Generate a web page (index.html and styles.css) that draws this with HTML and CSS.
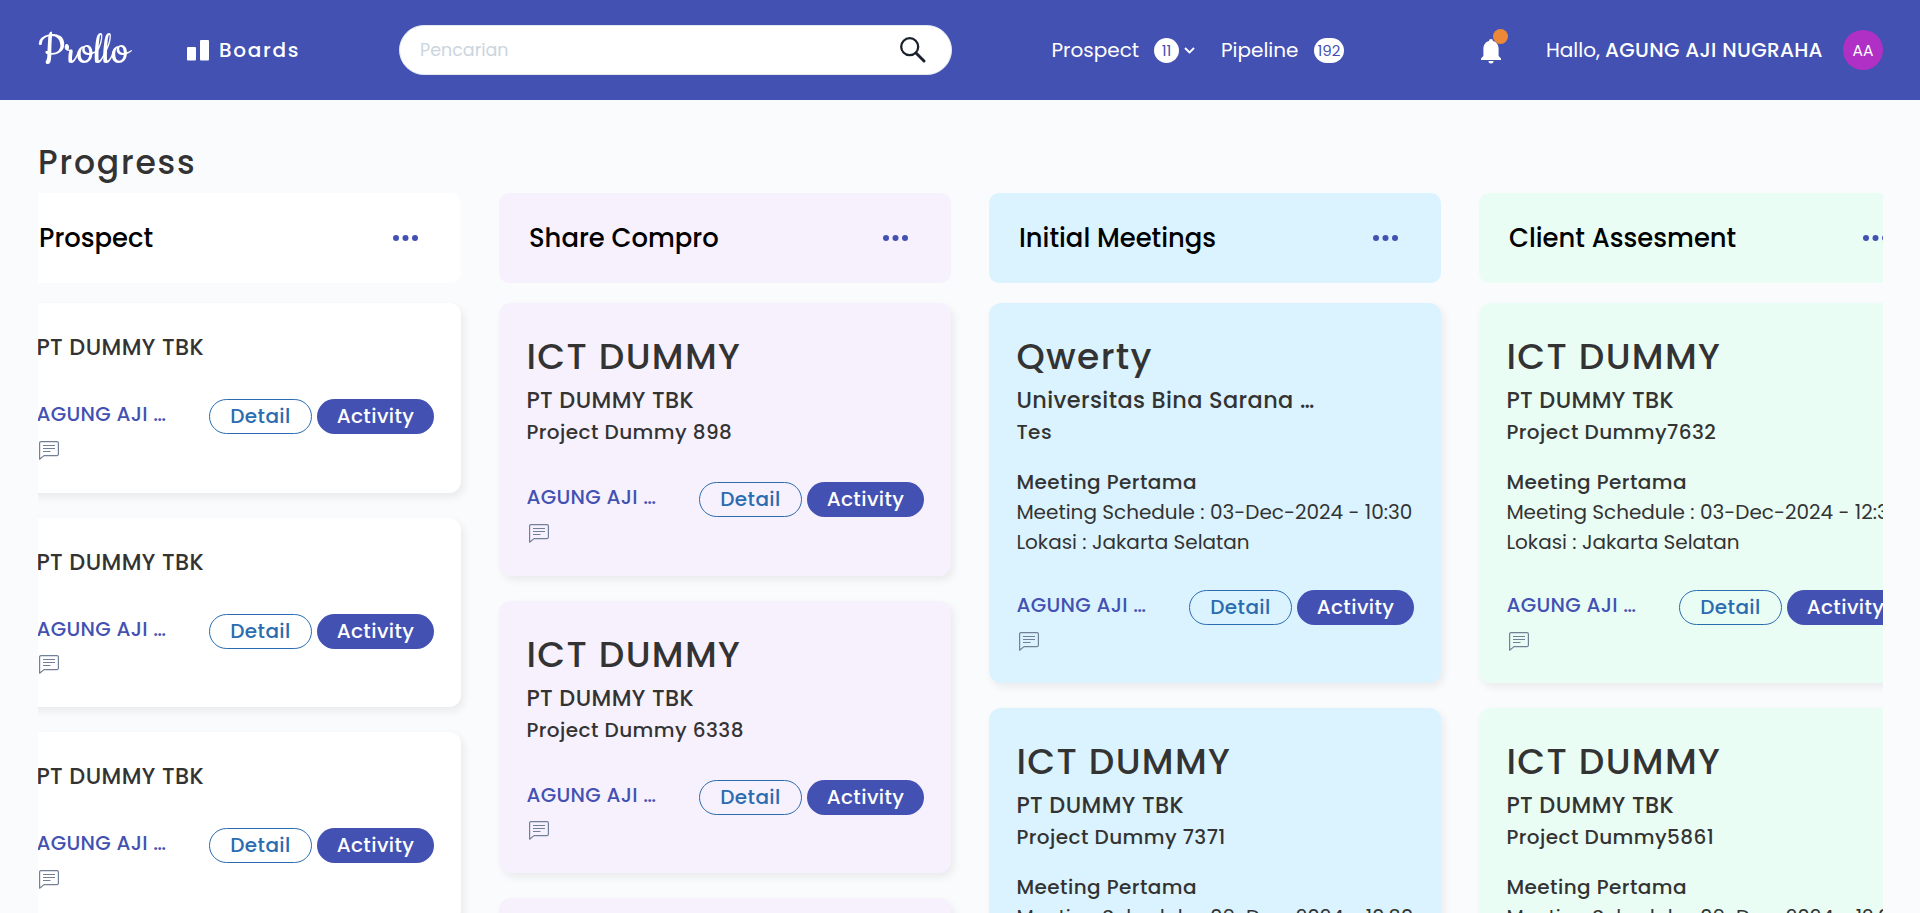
FILE: index.html
```
<!DOCTYPE html>
<html lang="id">
<head>
<meta charset="utf-8">
<title>Prollo - Boards</title>
<link rel="stylesheet" href="styles.css">
</head>
<body>
<svg class="sprite" aria-hidden="true">
  <symbol id="comment" viewBox="0 0 20 19">
    <path d="M.6 18.2V2A1.4 1.4 0 0 1 2 .6h16A1.4 1.4 0 0 1 19.400 2v11.200a1.400 1.400 0 0 1-1.400 1.400H5z M4 4.500h12 M4 7.500h12 M4 10.500h7.500" fill="none" stroke="#718096" stroke-width="1.200" stroke-linejoin="round"/>
  </symbol>
  <symbol id="dots" viewBox="0 0 26 6">
    <circle cx="3" cy="3" r="3"/><circle cx="12.500" cy="3" r="3"/><circle cx="22" cy="3" r="3"/>
  </symbol>
</svg>
<header class="navbar">
  <div class="logo">Prollo</div>
  <a class="boards">
    <svg width="22" height="21" viewBox="0 0 22 21" fill="#fff"><rect x="0" y="7" width="9" height="13.500" rx="1"/><rect x="13" y="0" width="9" height="20.500" rx="1"/></svg>
    <span>Boards</span>
  </a>
  <div class="search">
    <span>Pencarian</span>
    <svg width="26" height="26" viewBox="0 0 26 26" fill="none" stroke="#1a202c"><circle cx="9.700" cy="9.700" r="8.500" stroke-width="2.300"/><path d="M16 16l8 8" stroke-width="2.900" stroke-linecap="round"/></svg>
  </div>
  <nav class="links">
    <span class="link-prospect">Prospect</span><b class="count">11</b>
    <svg class="chevron" width="11" height="7" viewBox="0 0 11 7" fill="none" stroke="#fff" stroke-width="1.900"><path d="M1 1l4.500 4.500L10 1"/></svg>
    <span class="link-pipeline">Pipeline</span><b class="count wide">192</b>
  </nav>
  <div class="bell">
    <svg width="20" height="25" viewBox="0 0 20 25" fill="#fff"><path d="M10 0a2 2 0 0 1 2 2c3.800 1 5.600 4 5.600 8v7l2.400 2.500V21H0v-1.500L2.400 17v-7C2.400 6 4.200 3 8 2a2 2 0 0 1 2-2z"/><path d="M7.500 22h5a2.500 2.500 0 0 1-5 0z"/></svg>
    <i class="alert"></i>
  </div>
  <div class="user"><span class="hello">Hallo,</span><span class="name">AGUNG AJI NUGRAHA</span></div>
  <div class="avatar">AA</div>
</header>
<main>
  <h1>Progress</h1>
  <div class="board">
    <section class="column white">
      <div class="column-head"><h2>Prospect</h2><svg width="26" height="6"><use href="#dots"/></svg></div>
      <article class="card">
        <p class="company">PT DUMMY TBK</p>
        <footer><div><p class="owner">AGUNG AJI …</p><svg width="20" height="19"><use href="#comment"/></svg></div><button class="detail">Detail</button><button class="activity">Activity</button></footer>
      </article>
      <article class="card">
        <p class="company">PT DUMMY TBK</p>
        <footer><div><p class="owner">AGUNG AJI …</p><svg width="20" height="19"><use href="#comment"/></svg></div><button class="detail">Detail</button><button class="activity">Activity</button></footer>
      </article>
      <article class="card">
        <p class="company">PT DUMMY TBK</p>
        <footer><div><p class="owner">AGUNG AJI …</p><svg width="20" height="19"><use href="#comment"/></svg></div><button class="detail">Detail</button><button class="activity">Activity</button></footer>
      </article>
    </section>
    <section class="column purple">
      <div class="column-head"><h2>Share Compro</h2><svg width="26" height="6"><use href="#dots"/></svg></div>
      <article class="card">
        <h3>ICT DUMMY</h3>
        <p class="company">PT DUMMY TBK</p>
        <p class="project">Project Dummy 898</p>
        <footer><div><p class="owner">AGUNG AJI …</p><svg width="20" height="19"><use href="#comment"/></svg></div><button class="detail">Detail</button><button class="activity">Activity</button></footer>
      </article>
      <article class="card">
        <h3>ICT DUMMY</h3>
        <p class="company">PT DUMMY TBK</p>
        <p class="project">Project Dummy 6338</p>
        <footer><div><p class="owner">AGUNG AJI …</p><svg width="20" height="19"><use href="#comment"/></svg></div><button class="detail">Detail</button><button class="activity">Activity</button></footer>
      </article>
      <article class="card"></article>
    </section>
    <section class="column blue">
      <div class="column-head"><h2>Initial Meetings</h2><svg width="26" height="6"><use href="#dots"/></svg></div>
      <article class="card">
        <h3>Qwerty</h3>
        <p class="company">Universitas Bina Sarana …</p>
        <p class="project">Tes</p>
        <div class="meeting"><p class="meeting-name">Meeting Pertama</p><p class="schedule">Meeting Schedule : 03-Dec-2024 - 10:30</p><p class="place">Lokasi : Jakarta Selatan</p></div>
        <footer><div><p class="owner">AGUNG AJI …</p><svg width="20" height="19"><use href="#comment"/></svg></div><button class="detail">Detail</button><button class="activity">Activity</button></footer>
      </article>
      <article class="card">
        <h3>ICT DUMMY</h3>
        <p class="company">PT DUMMY TBK</p>
        <p class="project">Project Dummy 7371</p>
        <div class="meeting"><p class="meeting-name">Meeting Pertama</p><p class="schedule">Meeting Schedule : 09-Dec-2024 - 10:30</p></div>
      </article>
    </section>
    <section class="column green">
      <div class="column-head"><h2>Client Assesment</h2><svg width="26" height="6"><use href="#dots"/></svg></div>
      <article class="card">
        <h3>ICT DUMMY</h3>
        <p class="company">PT DUMMY TBK</p>
        <p class="project">Project Dummy7632</p>
        <div class="meeting"><p class="meeting-name">Meeting Pertama</p><p class="schedule">Meeting Schedule : 03-Dec-2024 - 12:30</p><p class="place">Lokasi : Jakarta Selatan</p></div>
        <footer><div><p class="owner">AGUNG AJI …</p><svg width="20" height="19"><use href="#comment"/></svg></div><button class="detail">Detail</button><button class="activity">Activity</button></footer>
      </article>
      <article class="card">
        <h3>ICT DUMMY</h3>
        <p class="company">PT DUMMY TBK</p>
        <p class="project">Project Dummy5861</p>
        <div class="meeting"><p class="meeting-name">Meeting Pertama</p><p class="schedule">Meeting Schedule : 09-Dec-2024 - 12:00</p></div>
      </article>
    </section>
  </div>
</main>
</body>
</html>
```

FILE: styles.css
```
* { box-sizing: border-box; }
body { margin: 0; height: 913px; overflow: hidden; background: #fafbfd; color: #333; font-family: Poppins, Inter, sans-serif; }
h1, h2, h3, p { margin: 0; font-weight: 500; white-space: nowrap; }
svg { display: block; flex: none; }
.sprite { position: absolute; width: 0; height: 0; }

.navbar { display: flex; align-items: center; height: 100px; padding: 0 37px 0 38px; background: #4351b3; color: #fff; font-size: 20px; white-space: nowrap; }
.logo { width: 149px; padding-top: 4px; font: 48.500px/50px Cookie, cursive; }
.boards { display: flex; align-items: center; gap: 10px; width: 212px; font-weight: 500; letter-spacing: 1.700px; }
.search { display: flex; align-items: center; justify-content: space-between; width: 553px; height: 50px; padding: 0 25px 0 20px; border: 1px solid #e2e8f0; border-radius: 25px; background: #fff; color: #cbd5e0; font-size: 17.500px; }
.links { display: flex; align-items: center; width: 429px; padding-left: 99.500px; }
.link-prospect { width: 102.500px; }
.link-pipeline { width: 93px; margin-left: 26px; }
.count { width: 25px; height: 25px; border-radius: 13px; background: #fff; color: #4351b3; font-size: 15px; font-weight: 400; line-height: 26px; text-align: center; }
.count.wide { width: 30px; }
.chevron { margin-left: 5px; }
.bell { position: relative; width: 165px; padding: 2px 0 0 100px; }
.alert { position: absolute; top: -8px; left: 112px; width: 15px; height: 15px; border-radius: 50%; background: #ed8936; }
.user { display: flex; gap: 5px; width: 297px; }
.name { font-weight: 500; letter-spacing: .330px; }
.avatar { flex: none; width: 40px; height: 40px; border-radius: 50%; background: #b02fc4; font-size: 15.500px; line-height: 41px; text-align: center; }

main { padding: 43px 37px 0 38px; }
h1 { height: 50px; font-size: 33px; line-height: 40px; letter-spacing: 1.800px; }
.board { display: flex; gap: 38px; height: 720px; overflow: hidden; }
.column { flex: none; width: 452px; }
.column:first-child { margin-left: -29px; }
.column-head { display: flex; align-items: center; justify-content: space-between; height: 90px; margin-bottom: 20px; padding: 0 42px 0 30px; border-radius: 10px; fill: #4351b3; }
h2 { font-size: 25.850px; line-height: 36px; color: #000; }
.card { margin-bottom: 25px; padding: 28px 27px 34.300px 27.400px; border-radius: 12px; box-shadow: 3px 4px 8px rgba(0, 0, 0, .07); }
.white > * { background: #fff; }
.purple > * { background: #f7f1fe; }
.blue > * { background: #dbf3ff; }
.green > * { background: #eafdf5; }
.purple .card { padding-bottom: 34.600px; }
.purple .card:last-child { min-height: 272px; }
.white .card { padding-top: 28px; padding-bottom: 34.600px; }
.white .company { margin-bottom: 1px; }
h3 { margin-bottom: 2px; font-size: 36px; line-height: 51px; letter-spacing: 1.350px; }
.company { font-size: 22.400px; line-height: 32px; letter-spacing: .400px; }
.project { margin-top: 1px; font-size: 20px; line-height: 30px; letter-spacing: .440px; }
.meeting { margin: 20px 0 -2px; font-size: 20px; line-height: 30px; }
.meeting-name { letter-spacing: .440px; }
.schedule, .place { font-weight: 400; }
.card footer { display: flex; gap: 5px; height: 97px; margin-bottom: -3px; padding-top: 35px; }
.card footer div { flex: 1; }
.card footer svg { margin: 11.600px 0 0 2.600px; }
.owner { color: #4351b3; font-size: 20px; line-height: 30px; letter-spacing: .300px; }
button { height: 35px; padding: 0; border: 0; border-radius: 18px; background: #4351b3; color: #fff; font: 500 20px/35px Poppins, Inter, sans-serif; letter-spacing: .400px; }
.activity { width: 117px; }
.detail { width: 103px; border: 1px solid #2b6cb0; background: none; color: #2b6cb0; line-height: 33px; }
```
